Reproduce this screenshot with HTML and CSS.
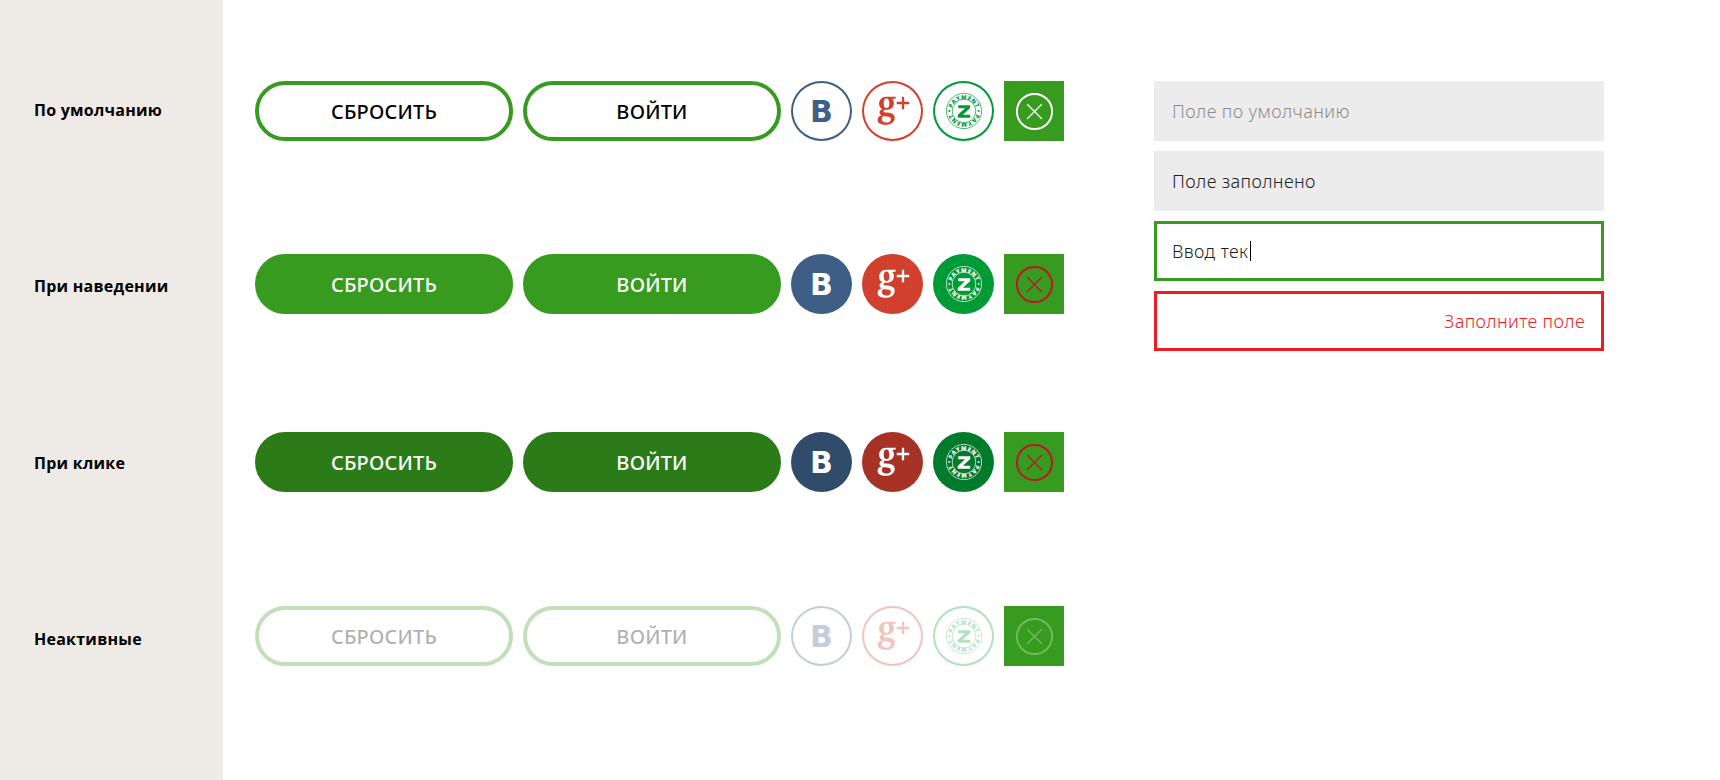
FILE: index.html
```
<!DOCTYPE html>
<html lang="ru">
<head>
<meta charset="utf-8">
<title>Состояния элементов</title>
<link rel="stylesheet" href="styles.css">
</head>
<body>
<svg class="defs" aria-hidden="true">
  <symbol id="g-plus" viewBox="0 0 61 60">
    <path fill="currentColor" fill-rule="evenodd" d="M24.400 15.700h9.300v1.900l-3.400.5c1 1.100 1.600 2.500 1.600 4.200 0 3.900-2.900 6.500-7.300 6.500l-1.900-.1c-.8.4-1.200.9-1.200 1.500 0 .9.900 1.200 3.600 1.400 4.800.4 7.600 1.700 7.600 5.300 0 4.100-4.100 6.900-9.200 6.900-4.700 0-7.900-1.700-7.900-4.800 0-2.300 1.500-3.900 4.100-4.700-1.400-.5-2.200-1.400-2.200-2.700 0-1.500 1-2.700 2.900-3.600-2.200-1-3.300-2.800-3.300-5.300 0-4.200 3-7 7.300-7zM24.400 17.400c-1.800 0-2.700 1.600-2.700 4.800s.9 4.900 2.800 4.900 2.800-1.600 2.800-4.900-.9-4.800-2.900-4.800zM21.600 35.100c-1.200.8-1.800 1.800-1.800 3 0 2.200 1.600 3.500 4.300 3.500 2.900 0 4.800-1.200 4.800-3.200 0-1.900-1.300-2.500-4-2.800z"/>
    <path fill="none" stroke="currentColor" stroke-width="2.300" d="M34.700 22h12.500M41 15.800v12.500"/>
  </symbol>
  <symbol id="z-pay" viewBox="0 0 61 60">
    <g fill="none" stroke="currentColor" stroke-width=".7"><circle cx="31" cy="30" r="17.600"/><circle cx="31" cy="30" r="11.800"/></g>
    <path fill="currentColor" d="M25.300 24.300h11.900v2.600l-7.300 6.900h7.300v2.900H24.700v-2.600l7.300-6.900h-6.700z"/>
    <circle cx="16.300" cy="30" r="1" fill="currentColor"/><circle cx="45.700" cy="30" r="1" fill="currentColor"/>
    <path id="arc-top" fill="none" d="M18.300 31a12.700 12.700 0 0 1 25.400 0"/>
    <path id="arc-bottom" fill="none" d="M43.700 29a12.700 12.700 0 0 1-25.400 0"/>
    <text class="ring-text"><textPath href="#arc-top" startOffset="50%">PAYMENT</textPath></text>
    <text class="ring-text"><textPath href="#arc-bottom" startOffset="50%">PAYMENT</textPath></text>
  </symbol>
  <symbol id="cross" viewBox="0 0 60 60">
    <circle cx="30.500" cy="30.500" r="17.600" fill="none" stroke="currentColor" stroke-width="2"/>
    <path fill="none" stroke="currentColor" stroke-width="1.400" stroke-linecap="round" d="M23.500 23.500l14 14M37.500 23.500l-14 14"/>
  </symbol>
</svg>
<div class="page">
  <aside class="labels">
    <div class="label">По умолчанию</div>
    <div class="label">При наведении</div>
    <div class="label">При клике</div>
    <div class="label">Неактивные</div>
  </aside>
  <main class="states">
    <div class="row">
      <button class="btn">СБРОСИТЬ</button><button class="btn">ВОЙТИ</button>
      <span class="social vk">B</span>
      <span class="social gp"><svg><use href="#g-plus"/></svg></span>
      <span class="social zp"><svg><use href="#z-pay"/></svg></span>
      <span class="close"><svg><use href="#cross"/></svg></span>
    </div>
    <div class="row hover">
      <button class="btn">СБРОСИТЬ</button><button class="btn">ВОЙТИ</button>
      <span class="social vk">B</span>
      <span class="social gp"><svg><use href="#g-plus"/></svg></span>
      <span class="social zp"><svg><use href="#z-pay"/></svg></span>
      <span class="close"><svg><use href="#cross"/></svg></span>
    </div>
    <div class="row hover active">
      <button class="btn">СБРОСИТЬ</button><button class="btn">ВОЙТИ</button>
      <span class="social vk">B</span>
      <span class="social gp"><svg><use href="#g-plus"/></svg></span>
      <span class="social zp"><svg><use href="#z-pay"/></svg></span>
      <span class="close"><svg><use href="#cross"/></svg></span>
    </div>
    <div class="row disabled">
      <button class="btn">СБРОСИТЬ</button><button class="btn">ВОЙТИ</button>
      <span class="social vk">B</span>
      <span class="social gp"><svg><use href="#g-plus"/></svg></span>
      <span class="social zp"><svg><use href="#z-pay"/></svg></span>
      <span class="close"><svg><use href="#cross"/></svg></span>
    </div>
  </main>
  <section class="fields">
    <div class="field empty">Поле по умолчанию</div>
    <div class="field">Поле заполнено</div>
    <div class="field focus">Ввод тек<span class="caret"></span></div>
    <div class="field error">Заполните поле</div>
  </section>
</div>
</body>
</html>
```
FILE: styles.css
```
* { box-sizing: border-box; }
body {
  margin: 0;
  background: #fff;
  color: #000;
  font-family: "Noto Sans", "Open Sans", sans-serif;
}
.defs { position: absolute; width: 61px; height: 60px; visibility: hidden; }
.page { display: flex; height: 780px; }
.labels {
  flex: none;
  width: 223px;
  padding: 98px 0 0 34px;
  background: #eeebe6;
  font-family: "Open Sans", "Noto Sans", sans-serif;
  font-size: 16px;
  font-weight: 700;
  line-height: 24px;
  letter-spacing: .25px;
}
.label { height: 24px; margin-bottom: 152px; white-space: nowrap; }
.label:nth-child(2) { margin-bottom: 153px; }
.states { padding: 81px 0 0 32px; }
.row { display: flex; gap: 10px; height: 60px; margin-bottom: 113px; }
.row:nth-child(2) { margin-bottom: 118px; }
.row:nth-child(3) { margin-bottom: 114px; }
.btn {
  width: 258px;
  height: 60px;
  padding: 2px 0 0;
  border: 4px solid #369b1e;
  border-radius: 30px;
  background: #fff;
  color: #000;
  font: 500 20px/28px "Noto Sans", "Open Sans", sans-serif;
  letter-spacing: .2px;
}
.social {
  display: flex;
  align-items: center;
  justify-content: center;
  width: 61px;
  height: 60px;
  border: 2px solid currentColor;
  border-radius: 50%;
}
.social svg, .close svg { flex: none; display: block; width: 61px; height: 60px; }
.close svg { width: 60px; }
.vk { padding-top: 1px; color: #3e5f87; font: 700 30px/54px "DejaVu Sans", sans-serif; }
.gp { color: #d3402d; }
.zp { color: #009b37; }
.close { width: 60px; height: 60px; background: #369b1e; color: #fff; }
.ring-text { fill: currentColor; font: 800 5.600px "Open Sans", sans-serif; letter-spacing: .6px; text-anchor: middle; }
.hover .btn { background: #369b1e; color: #fff; }
.hover .social { border: 0; color: #fff; }
.hover .vk { background: #3e5e85; }
.hover .gp { background: #d13f2d; }
.hover .zp { background: #009a37; }
.hover .close { color: #be1728; }
.active .btn { border-color: #2b7c18; background: #2b7c18; }
.active .vk { background: #314b6a; }
.active .gp { background: #a63225; }
.active .zp { background: #007b2c; }
.disabled .btn, .disabled .social { opacity: .3; }
.disabled .close { color: rgba(255, 255, 255, .3); }
.fields { display: flex; flex-direction: column; gap: 10px; margin-left: 90px; padding-top: 81px; }
.field {
  display: flex;
  align-items: center;
  width: 450px;
  height: 60px;
  padding: 0 18px 0 15px;
  border: 3px solid #ececec;
  background: #ececec;
  color: #222;
  font-size: 18px;
  font-weight: 300;
  letter-spacing: .4px;
  line-height: 26px;
}
.empty { color: #8c8c8c; }
.focus { border-color: #369b1e; background: #fff; }
.caret { width: 1px; height: 20px; margin-left: 2px; background: #000; }
.error { justify-content: flex-end; padding-right: 16px; border-color: #ed1c24; background: #fff; color: #ed1c24; }
```
